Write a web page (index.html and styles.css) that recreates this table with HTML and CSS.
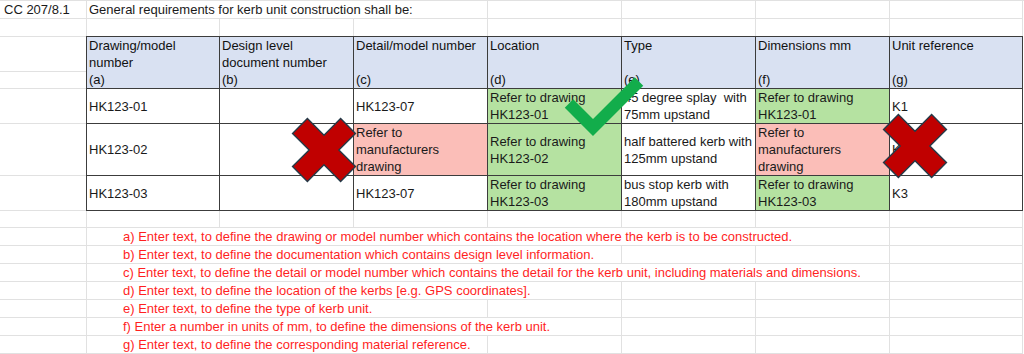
FILE: index.html
```html
<!DOCTYPE html>
<html lang="en">
<head>
<meta charset="utf-8">
<title>CC 207/8.1 Kerb unit construction</title>
<link rel="stylesheet" href="styles.css">
</head>
<body>
<div class="sheet">
  <div class="row">
    <div class="c c0"><span class="code">CC 207/8.1</span></div>
    <div class="c c1"><span class="spill title">General requirements for kerb unit construction shall be:</span></div>
    <div class="c"></div><div class="c"></div><div class="c"></div><div class="c"></div><div class="c"></div><div class="c"></div>
  </div>
  <div class="row row-open">
    <div class="c"></div><div class="c"></div><div class="c"></div><div class="c"></div><div class="c"></div><div class="c"></div><div class="c"></div><div class="c"></div>
  </div>

  <div class="mid">
    <div class="gutter">
      <div class="g g-a"></div>
      <div class="g g-b"></div>
      <div class="g g-c"></div>
      <div class="g g-d"></div>
      <div class="g g-c"></div>
    </div>
    <div class="tbl">
      <div class="cell th"><div>Drawing/model<br>number<br>(a)</div></div>
      <div class="cell th"><div>Design level<br>document number<br>(b)</div></div>
      <div class="cell th"><div>Detail/model number<br><br>(c)</div></div>
      <div class="cell th"><div>Location<br><br>(d)</div></div>
      <div class="cell th"><div>Type<br><br>(e)</div></div>
      <div class="cell th"><div>Dimensions mm<br><br>(f)</div></div>
      <div class="cell th"><div>Unit reference<br><br>(g)</div></div>

      <div class="cell"><div>HK123-01</div></div>
      <div class="cell"></div>
      <div class="cell"><div>HK123-07</div></div>
      <div class="cell ok"><div>Refer to drawing HK123-01</div></div>
      <div class="cell"><div>45 degree splay&nbsp; with 75mm upstand</div></div>
      <div class="cell ok"><div>Refer to drawing HK123-01</div></div>
      <div class="cell"><div>K1</div></div>

      <div class="cell"><div>HK123-02</div></div>
      <div class="cell"></div>
      <div class="cell bad"><div>Refer to manufacturers drawing</div></div>
      <div class="cell ok"><div>Refer to drawing HK123-02</div></div>
      <div class="cell"><div>half battered kerb with 125mm upstand</div></div>
      <div class="cell bad"><div>Refer to manufacturers drawing</div></div>
      <div class="cell"><div>K2</div></div>

      <div class="cell"><div>HK123-03</div></div>
      <div class="cell"></div>
      <div class="cell"><div>HK123-07</div></div>
      <div class="cell ok"><div>Refer to drawing HK123-03</div></div>
      <div class="cell"><div>bus stop kerb with 180mm upstand</div></div>
      <div class="cell ok"><div>Refer to drawing HK123-03</div></div>
      <div class="cell"><div>K3</div></div>
    </div>
  </div>

  <div class="row row-gap">
    <div class="c"></div><div class="c"></div><div class="c"></div><div class="c"></div><div class="c"></div><div class="c"></div><div class="c"></div><div class="c"></div>
  </div>
  <div class="row">
    <div class="c"></div>
    <div class="c c1 note"><span class="spill red">a) Enter text, to define the drawing or model number which contains the location where the kerb is to be constructed.</span></div>
    <div class="c"></div><div class="c"></div><div class="c"></div><div class="c"></div><div class="c"></div><div class="c"></div>
  </div>
  <div class="row">
    <div class="c"></div>
    <div class="c c1 note"><span class="spill red">b) Enter text, to define the documentation which contains design level information.</span></div>
    <div class="c"></div><div class="c"></div><div class="c"></div><div class="c"></div><div class="c"></div><div class="c"></div>
  </div>
  <div class="row">
    <div class="c"></div>
    <div class="c c1 note"><span class="spill red">c) Enter text, to define the detail or model number which contains the detail for the kerb unit, including materials and dimensions.</span></div>
    <div class="c"></div><div class="c"></div><div class="c"></div><div class="c"></div><div class="c"></div><div class="c"></div>
  </div>
  <div class="row">
    <div class="c"></div>
    <div class="c c1 note"><span class="spill red">d) Enter text, to define the location of the kerbs [e.g. GPS coordinates].</span></div>
    <div class="c"></div><div class="c"></div><div class="c"></div><div class="c"></div><div class="c"></div><div class="c"></div>
  </div>
  <div class="row">
    <div class="c"></div>
    <div class="c c1 note"><span class="spill red">e) Enter text, to define the type of kerb unit.</span></div>
    <div class="c"></div><div class="c"></div><div class="c"></div><div class="c"></div><div class="c"></div><div class="c"></div>
  </div>
  <div class="row">
    <div class="c"></div>
    <div class="c c1 note"><span class="spill red">f) Enter a number in units of mm, to define the dimensions of the kerb unit.</span></div>
    <div class="c"></div><div class="c"></div><div class="c"></div><div class="c"></div><div class="c"></div><div class="c"></div>
  </div>
  <div class="row">
    <div class="c"></div>
    <div class="c c1 note"><span class="spill red">g) Enter text, to define the corresponding material reference.</span></div>
    <div class="c"></div><div class="c"></div><div class="c"></div><div class="c"></div><div class="c"></div><div class="c"></div>
  </div>

  <svg class="mark x-left" viewBox="-33 -33 66 66" aria-hidden="true">
    <path transform="rotate(45)" d="M-10.5-34H10.5V-10.5H34V10.5H10.5V34H-10.5V10.5H-34V-10.5H-10.5Z"/>
  </svg>
  <svg class="mark x-right" viewBox="-33 -33 66 66" aria-hidden="true">
    <path transform="rotate(45)" d="M-10.5-34H10.5V-10.5H34V10.5H10.5V34H-10.5V10.5H-34V-10.5H-10.5Z"/>
  </svg>
  <svg class="check" viewBox="550 70 100 75" aria-hidden="true">
    <polyline points="569,102.5 593,126.5 639,80.5"/>
  </svg>
</div>
</body>
</html>
```

FILE: styles.css
```css
html, body {
  margin: 0;
  padding: 0;
  background: #ffffff;
}

body {
  font-family: "Liberation Sans", Arial, sans-serif;
  font-size: 13px;
  color: #1a1a1a;
}

.sheet {
  position: relative;
  width: 1024px;
  height: 354px;
  overflow: hidden;
  border-top: 1px solid #e1e1e1;
  box-sizing: border-box;
}

.row {
  display: grid;
  grid-template-columns: 87px 133px repeat(5, 134px) 133px;
  height: 18px;
}

.c {
  box-sizing: border-box;
  height: 18px;
  border-right: 1px solid #e1e1e1;
  border-bottom: 1px solid #e1e1e1;
  line-height: 17px;
  white-space: nowrap;
}

.row-open,
.row-open .c {
  height: 17px;
  border-bottom: none;
}

.row-gap,
.row-gap .c {
  height: 17px;
}

.c0 .code {
  padding-left: 4px;
}

.c1 {
  padding-left: 2px;
}

.c1.note {
  padding-left: 36px;
}

.spill {
  position: relative;
  z-index: 1;
  display: inline-block;
  height: 17px;
  line-height: 17px;
  background: #ffffff;
  padding-right: 2px;
}

.red {
  color: #ff1f1f;
}

/* middle block: gutter + bordered table */
.mid {
  display: flex;
}

.gutter {
  width: 86px;
  border-top: 1px solid #e1e1e1;
}

.g {
  border-bottom: 1px solid #e1e1e1;
}

.g-a { height: 34px; }
.g-b { height: 16px; }
.g-c { height: 34px; }
.g-d { height: 51px; }

.tbl {
  display: grid;
  grid-template-columns: 132px repeat(5, 133px) 132px;
  grid-template-rows: 51px 34px 51px 34px;
  gap: 1px;
  background: #3c3c3c;
  border: 1px solid #3c3c3c;
}

.cell {
  background: #ffffff;
  display: flex;
  align-items: center;
  padding: 0 2px 0 2px;
  line-height: 17px;
  color: #1a1a1a;
  overflow: hidden;
}

.cell.th {
  background: #d9e1f2;
  align-items: flex-start;
  color: #111111;
}

.cell.ok {
  background: #b5e2a1;
}

.cell.bad {
  background: #fbbeb8;
}

/* overlay marks */
.mark {
  position: absolute;
  width: 66px;
  height: 66px;
  overflow: visible;
}

.mark path {
  fill: #c00000;
  stroke: #243a48;
  stroke-width: 1.4;
  stroke-linejoin: miter;
}

.x-left {
  left: 291px;
  top: 116px;
}

.x-right {
  left: 882px;
  top: 112px;
}

.check {
  position: absolute;
  left: 550px;
  top: 70px;
  width: 100px;
  height: 75px;
  overflow: visible;
}

.check polyline {
  fill: none;
  stroke: #12ad4b;
  stroke-width: 12;
  stroke-linecap: butt;
  stroke-linejoin: miter;
}
```
